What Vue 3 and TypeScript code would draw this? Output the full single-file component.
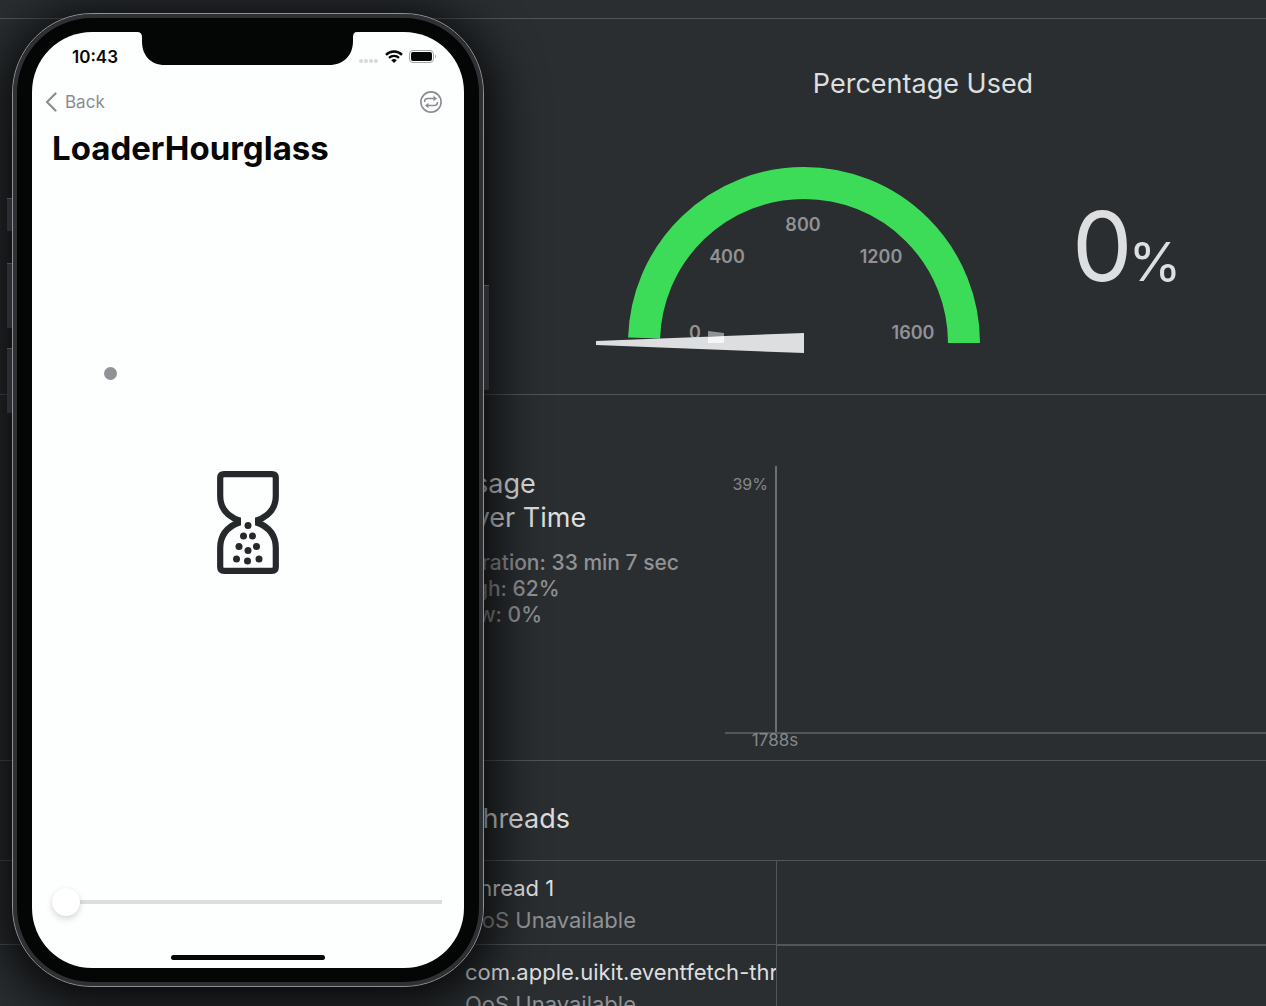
<script setup lang="ts">
import { ref } from 'vue'

interface Thread {
  name: string
  qos: string
}

interface Tick {
  label: string
  x: number
  y: number
}

const ticks: Tick[] = [
  { label: '0', x: 99, y: 173 },
  { label: '400', x: 131, y: 97 },
  { label: '800', x: 207, y: 65 },
  { label: '1200', x: 285, y: 97 },
  { label: '1600', x: 317, y: 173 },
]

const stats: string[] = ['Duration: 33 min 7 sec', 'High: 62%', 'Low: 0%']

const threads: Thread[] = [
  { name: 'Thread 1', qos: 'QoS Unavailable' },
  { name: 'com.apple.uikit.eventfetch-thread', qos: 'QoS Unavailable' },
]

const progress = ref(0)
</script>

<template>
  <div class="desktop">
    <main class="report">
      <section class="cpu">
        <h2>Percentage Used</h2>
        <div class="cpu-row">
          <svg class="gauge" viewBox="0 0 384 190" role="img" aria-label="CPU gauge">
            <path d="M48.100 172A160 160 0 0 1 208 17A160 160 0 0 1 368 177" fill="none" stroke="#3ddc58" stroke-width="32" />
            <text v-for="t in ticks" :key="t.label" :x="t.x" :y="t.y" text-anchor="middle">{{ t.label }}</text>
            <path d="M0 175L208 167V187L0 179Z" fill="#dddedf" />
            <path d="M112 165L128 167V171L112 172Z" fill="#909295" />
            <path d="M112 171L128 170V177H112Z" fill="#f6f6f6" />
          </svg>
          <p class="percent">0<span>%</span></p>
        </div>
      </section>

      <section class="usage">
        <div class="usage-info">
          <h2>Usage<br />Over Time</h2>
          <p v-for="s in stats" :key="s">{{ s }}</p>
        </div>
        <div class="chart">
          <div class="plot-row">
            <span class="y-label">39%</span>
            <div class="plot"></div>
          </div>
          <div class="x-axis"><span>1788s</span></div>
        </div>
      </section>

      <section class="threads">
        <h2>Threads</h2>
        <table>
          <tbody>
            <tr v-for="t in threads" :key="t.name">
              <th scope="row">
                <span class="name">{{ t.name }}</span>
                <span class="qos">{{ t.qos }}</span>
              </th>
              <td></td>
            </tr>
          </tbody>
        </table>
      </section>
    </main>

    <div class="phone">
      <i class="key mute"></i>
      <i class="key up"></i>
      <i class="key down"></i>
      <i class="key power"></i>
      <div class="screen">
        <svg class="notch" viewBox="0 0 220 33" aria-hidden="true">
          <path d="M0 0H220Q216 0 216 5V9C216 23 207 33 192 33H28C13 33 5 23 5 9V5Q5 0 0 0Z" fill="#040505" />
        </svg>
        <header class="status">
          <span class="time">10:43</span>
          <svg class="signal" viewBox="0 0 78 16" aria-hidden="true">
            <g fill="#d8d9da">
              <circle cx="3" cy="12" r="2" />
              <circle cx="8" cy="12" r="2" />
              <circle cx="13" cy="12" r="2" />
              <circle cx="18" cy="12" r="2" />
            </g>
            <g fill="none" stroke="#050606" stroke-width="2.4">
              <path d="M28 5.8A11.4 11.4 0 0 1 44 5.8" />
              <path d="M31 8.9A7.2 7.2 0 0 1 41 8.9" />
            </g>
            <path d="M33.2 11.2Q36 8.9 38.8 11.2L36 14Z" fill="#050606" />
            <rect x="51.5" y="1.5" width="24" height="12" rx="3.5" fill="none" stroke="#a4a5a7" />
            <rect x="53" y="3" width="21" height="9" rx="2" fill="#050606" />
            <path d="M77 5.5Q79 7.5 77 9.5Z" fill="#a4a5a7" />
          </svg>
        </header>
        <nav class="nav">
          <a href="#">
            <svg viewBox="0 0 12 20" width="12" height="20" aria-hidden="true">
              <path d="M10.5 1.5L2 10L10.5 18.5" fill="none" stroke="#8b8c90" stroke-width="2.2" stroke-linecap="round" stroke-linejoin="round" />
            </svg>
            Back
          </a>
          <button type="button" aria-label="Repeat">
            <svg viewBox="0 0 22 22" width="22" height="22" fill="none" stroke="#8b8c90" aria-hidden="true">
              <circle cx="11" cy="11" r="10.1" stroke-width="1.6" />
              <path d="M4.6 10.5C4.6 8.4 5.7 7.5 7.5 7.5H14" stroke-width="1.5" stroke-linecap="round" />
              <path d="M17.4 11.5C17.4 13.6 16.3 14.5 14.5 14.5H8" stroke-width="1.5" stroke-linecap="round" />
              <path d="M13.5 4.8L17 7.5L13.5 10.2ZM8.5 11.8L5 14.5L8.5 17.2Z" fill="#8b8c90" stroke="none" />
            </svg>
          </button>
        </nav>
        <h1>LoaderHourglass</h1>
        <div class="stage">
          <svg class="hourglass" viewBox="0 0 64 106" aria-hidden="true">
            <g fill="none" stroke="#26292c" stroke-width="6.2">
              <path d="M23.5 47.5V55.5M40.5 47.5V55.5" stroke-width="3" />
              <path d="M23 50.5C11 46 4.2 38 4.2 26V8Q4.2 4.2 8 4.2H56Q59.8 4.2 59.8 8V26C59.8 38 53 46 41 50.5" />
              <path d="M23 52.5C11 57 4.2 66 4.2 78V97Q4.2 100.8 8 100.8H56Q59.8 100.8 59.8 97V78C59.8 66 53 57 41 52.5" />
            </g>
            <g fill="#26292c">
              <circle cx="32" cy="55.5" r="3.5" />
              <circle cx="27.5" cy="66" r="3.5" />
              <circle cx="36.5" cy="66" r="3.5" />
              <circle cx="23" cy="76.5" r="3.5" />
              <circle cx="32" cy="80.5" r="3.5" />
              <circle cx="40.5" cy="76.5" r="3.5" />
              <circle cx="20.5" cy="89" r="3.5" />
              <circle cx="31.5" cy="91" r="3.5" />
              <circle cx="43" cy="89" r="3.5" />
            </g>
          </svg>
        </div>
        <input v-model.number="progress" class="slider" type="range" min="0" max="100" aria-label="Progress" />
        <div class="home"></div>
        <i class="touch"></i>
      </div>
    </div>
  </div>
</template>

<style>
body {
  background: #2a2e31;
}
</style>

<style scoped>
.desktop {
  position: relative;
  height: 100vh;
  overflow: hidden;
  background: #2a2e31;
  color: #dddedf;
  font-family: Inter, "Liberation Sans", sans-serif;
}
.desktop * {
  box-sizing: border-box;
}
h1,
h2,
p {
  margin: 0;
}
h2 {
  font-size: 27px;
  line-height: 34px;
  font-weight: 400;
}
.report {
  padding-top: 18px;
}
.report section {
  border-top: 1px solid #50565a;
}
.cpu {
  height: 376px;
  padding: 48px 0 0 580px;
}
.cpu h2 {
  text-align: center;
}
.cpu-row {
  display: flex;
  gap: 92px;
  padding: 65px 0 0 16px;
}
.gauge {
  flex: none;
  width: 384px;
  height: 190px;
}
.gauge text {
  font-size: 18px;
  font-weight: 600;
  fill: #909295;
}
.percent {
  padding-top: 20px;
  font-size: 96px;
  line-height: 120px;
  font-weight: 400;
  white-space: nowrap;
}
.percent span {
  margin-left: -4px;
  font-size: 54px;
}
.usage {
  display: flex;
  height: 366px;
  padding-left: 454px;
}
.usage-info {
  flex: none;
  width: 271px;
  padding-top: 72px;
}
.usage-info h2 {
  margin-bottom: 15px;
}
.usage-info p {
  font-size: 21px;
  line-height: 26px;
  font-weight: 500;
  color: #909295;
  white-space: nowrap;
}
.chart {
  flex: 1;
  padding-top: 71px;
  font-size: 17px;
  line-height: 20px;
  color: #85888b;
}
.plot-row {
  display: flex;
  height: 266px;
}
.y-label {
  width: 50px;
  padding: 8px 7px 0 0;
  font-size: 16px;
  text-align: right;
}
.plot {
  flex: 1;
  border-left: 2px solid #6a6f74;
}
.x-axis {
  border-top: 2px solid #50565a;
}
.x-axis span {
  display: block;
  width: 100px;
  margin-top: -4px;
  text-align: center;
}
.threads h2 {
  padding: 41px 0 24px 465px;
}
table {
  width: 100%;
  table-layout: fixed;
  border-collapse: separate;
  border-spacing: 0;
}
th {
  width: 777px;
  height: 84px;
  padding: 11px 0 0 465px;
  overflow: hidden;
  border-top: 1px solid #50565a;
  border-right: 1px solid #50565a;
  font-size: 22px;
  line-height: 32px;
  font-weight: 400;
  text-align: left;
  vertical-align: top;
}
td {
  padding: 0;
  border-top: 1px solid #50565a;
}
tr + tr td {
  border-top-width: 2px;
}
th span {
  display: block;
  overflow: hidden;
  white-space: nowrap;
}
.qos {
  color: #909295;
}
.phone {
  position: absolute;
  top: 13px;
  left: 12px;
  width: 472px;
  padding: 18px 19px;
  border: 1px solid #8e9095;
  border-radius: 80px;
  background: #040505;
  box-shadow:
    inset 0 0 0 4px #2e3034,
    0 8px 50px 10px rgba(0, 0, 0, 0.85);
}
.key {
  position: absolute;
  left: -6px;
  width: 5px;
  height: 65px;
  border-top: 1px solid #4a4d50;
  background: #2a2d30;
}
.mute {
  top: 184px;
  height: 33px;
}
.up {
  top: 249px;
}
.down {
  top: 334px;
}
.power {
  top: 271px;
  left: auto;
  right: -6px;
  height: 105px;
}
.screen {
  position: relative;
  display: flex;
  flex-direction: column;
  height: 936px;
  border-radius: 60px;
  background: #fdfefe;
  color: #050606;
}
.notch {
  position: absolute;
  top: 0;
  left: 105px;
  width: 220px;
  height: 33px;
}
.status {
  display: flex;
  align-items: center;
  justify-content: space-between;
  height: 50px;
  padding: 0 28px 0 40px;
}
.time {
  font-size: 17px;
  line-height: 20px;
  font-weight: 600;
}
.signal {
  width: 78px;
  height: 16px;
}
.nav {
  display: flex;
  align-items: center;
  justify-content: space-between;
  height: 40px;
  padding: 0 22px 0 13px;
}
.nav a {
  display: flex;
  align-items: center;
  gap: 8px;
  font-size: 17px;
  line-height: 20px;
  color: #8b8c90;
  text-decoration: none;
}
.nav button {
  display: flex;
  padding: 0;
  border: 0;
  background: none;
}
h1 {
  padding: 6px 20px 0;
  font-size: 33px;
  line-height: 41px;
  font-weight: 700;
}
.stage {
  flex: 1;
  display: flex;
  justify-content: center;
  padding-top: 301px;
}
.hourglass {
  width: 64px;
  height: 106px;
}
.slider {
  appearance: none;
  height: 28px;
  margin: 0 22px 39px 20px;
  background: linear-gradient(#dcdddd, #dcdddd) right center / calc(100% - 14px) 4px no-repeat;
}
.slider::-webkit-slider-thumb {
  appearance: none;
  width: 28px;
  height: 28px;
  border-radius: 50%;
  background: #fff;
  box-shadow:
    0 3px 6px rgba(0, 0, 0, 0.15),
    0 0 2px rgba(0, 0, 0, 0.06);
}
.home {
  align-self: center;
  width: 154px;
  height: 5px;
  margin-bottom: 8px;
  border-radius: 3px;
  background: #050606;
}
.touch {
  position: absolute;
  top: 335px;
  left: 72px;
  width: 13px;
  height: 13px;
  border-radius: 50%;
  background: #919296;
}
</style>
